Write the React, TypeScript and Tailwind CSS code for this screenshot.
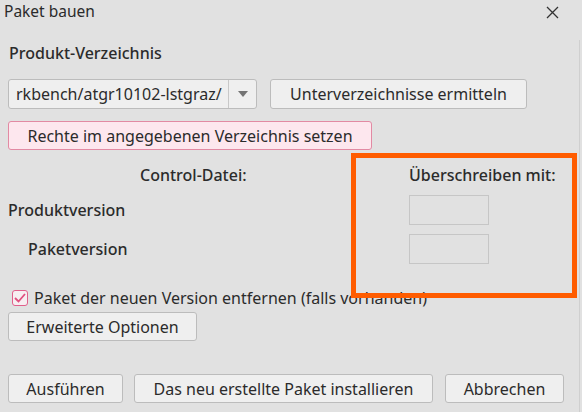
import React from "react";

const btn =
  "flex items-center justify-center h-[29px] rounded-[3px] border border-[#bcbcbc] bg-[#efefef] text-[#2b2b2b]";

export default function App() {
  return (
    <div
      className="relative w-[582px] h-[412px] overflow-hidden bg-[#e1e1e1] text-[16px] text-[#2b2b2b]"
      style={{ fontFamily: '"Noto Sans", "Open Sans", sans-serif' }}
    >
      {/* Titel */}
      <div className="flex items-center justify-between h-[24px] pl-[4px] pr-[23px]">
        <span className="leading-none text-[15.5px]">Paket bauen</span>
        <svg width="13" height="13" viewBox="0 0 13 13" className="text-[#333]">
          <path d="M1 1 L12 12 M12 1 L1 12" stroke="currentColor" strokeWidth="1.3" />
        </svg>
      </div>

      <div className="flex flex-col pl-[8px]">
        <div className="mt-[17px] h-[24px] leading-[24px] font-medium pl-[1px]">Produkt-Verzeichnis</div>

        {/* Verzeichnis-Auswahl */}
        <div className="mt-[14px] flex items-center gap-[13px]">
          <div className="flex h-[30px] w-[249px] rounded-[3px] border border-[#bcbcbc] bg-[#efefef]">
            <div className="flex-1 flex items-center pl-[7px] overflow-hidden whitespace-nowrap">
              rkbench/atgr10102-lstgraz/
            </div>
            <div className="w-[28px] flex items-center justify-center border-l border-[#c8c8c8]">
              <svg width="10" height="6" viewBox="0 0 10 6">
                <path d="M0 0 L10 0 L5 6 Z" fill="#747474" />
              </svg>
            </div>
          </div>
          <div className={`${btn} w-[257px] h-[30px]`}>Unterverzeichnisse ermitteln</div>
        </div>

        <div className="mt-[12px] flex h-[29px] w-[364px] items-center justify-center rounded-[3px] border border-[#e28aa3] bg-[#fde7ee]">
          Rechte im angegebenen Verzeichnis setzen
        </div>

        {/* Control-Datei */}
        <div className="mt-[14px] grid grid-cols-[401px_1fr] items-center font-medium">
          <div className="h-[22px] leading-[22px] pl-[132px]">Control-Datei:</div>
          <div className="h-[22px] leading-[22px]">Überschreiben mit:</div>

          <div className="mt-[9px]">Produktversion</div>
          <div className="mt-[9px] h-[30px] w-[80px] border border-[#c6c6c6] bg-[#e1e1e1]" />

          <div className="mt-[9px] pl-[20px]">Paketversion</div>
          <div className="mt-[9px] h-[30px] w-[80px] border border-[#c6c6c6] bg-[#e1e1e1]" />
        </div>

        <div className="mt-[25px] flex items-center gap-[6px] pl-[4px] h-[18px]">
          <div className="flex h-[16px] w-[16px] items-center justify-center rounded-[3px] border border-[#e0608b] bg-[#f7eef1]">
            <svg width="12" height="10" viewBox="0 0 12 10">
              <path d="M1 5 L4.5 8.5 L11 1" fill="none" stroke="#e0507f" strokeWidth="1.8" />
            </svg>
          </div>
          <span>Paket der neuen Version entfernen (falls vorhanden)</span>
        </div>

        <div className={`${btn} mt-[5px] w-[189px]`}>Erweiterte Optionen</div>

        {/* Aktionen */}
        <div className="mt-[33px] flex items-center">
          <div className={`${btn} w-[115px]`}>Ausführen</div>
          <div className={`${btn} ml-[11px] w-[299px]`}>Das neu erstellte Paket installieren</div>
          <div className={`${btn} ml-[12px] w-[119px]`}>Abbrechen</div>
        </div>
      </div>

      {/* Fensterrand */}
      <div className="absolute right-[2px] top-[40px] bottom-0 w-px bg-[#cfcfcf]" />

      {/* Markierung */}
      <div className="absolute left-[351px] top-[153px] h-[145px] w-[226px] border-[5px] border-[#ff5c00]" />
    </div>
  );
}
